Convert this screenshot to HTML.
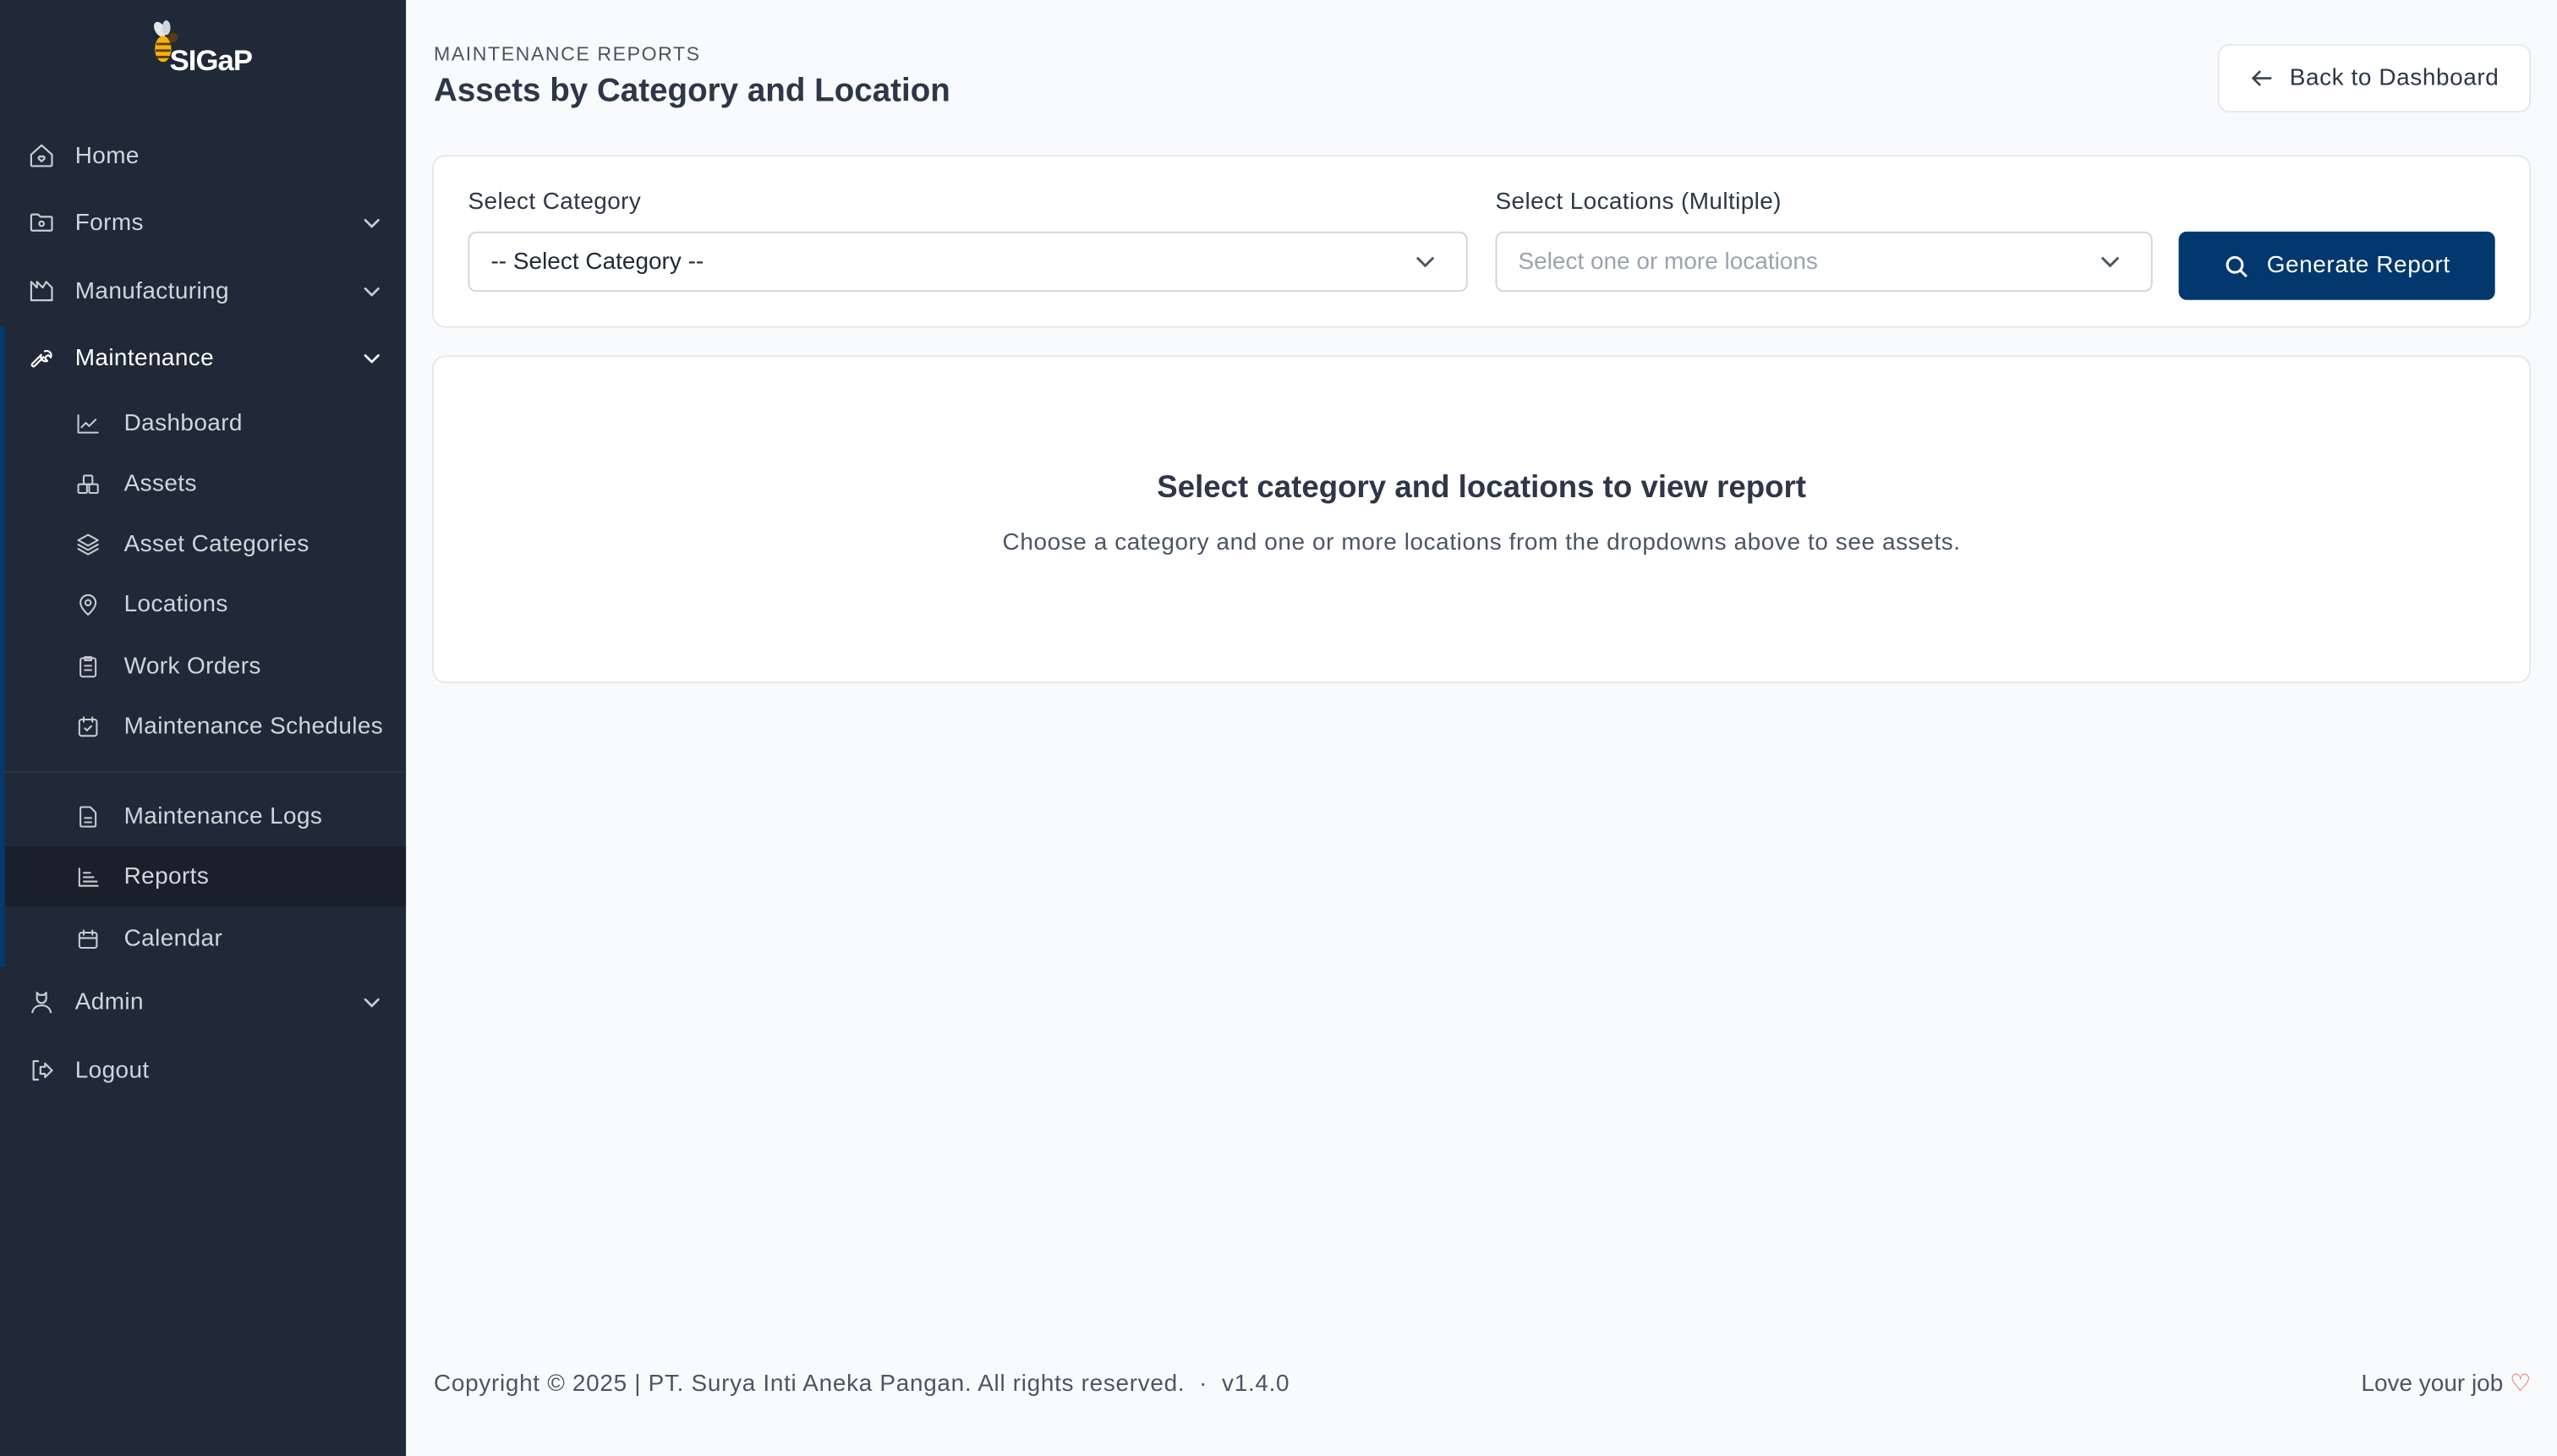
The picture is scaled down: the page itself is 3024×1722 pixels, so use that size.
<!DOCTYPE html>
<html><head><meta charset="utf-8"><style>
*{box-sizing:border-box;margin:0;padding:0}
html,body{width:3024px;height:1722px;overflow:hidden;background:#f9fafb}
#w{position:absolute;left:0;top:0;width:1568px;height:893px;transform:scale(1.92857,1.9283);transform-origin:0 0;font-family:"Liberation Sans",sans-serif}
.sb{position:absolute;left:0;top:0;width:249px;height:893px;background:#1f2937}
.bar{position:absolute;left:0;top:200px;width:3px;height:393px;background:#053a70}
.it{position:absolute;left:0;width:249px;height:37px;display:flex;align-items:center;color:#d1d5db;font-size:14.5px;letter-spacing:0.2px}
.it svg{position:absolute;width:17px;height:17px;fill:none;stroke:#c9ccd1;stroke-width:1.6;stroke-linecap:round;stroke-linejoin:round}
.top svg{left:17px}.top span{position:absolute;left:46px}
.sub svg{left:46px;width:16px;height:16px}.sub span{position:absolute;left:76px}
.it .chev{left:223px;width:10px;height:6px;stroke-width:1.4}
.main{position:absolute;left:249px;top:0;right:0;bottom:0;background:#f9fafb;color:#374151}
.card{position:absolute;background:#fff;border:1px solid #e5e7eb;border-radius:8px}
.sel{position:absolute;height:37px;border:1px solid #d1d5db;border-radius:5px;background:#fff;font-size:14.5px;display:flex;align-items:center;padding-left:13px}
</style></head><body><div id="w">
<div class="sb">
 <div style="position:absolute;left:90px;top:12px;width:70px;height:36px">
  <svg width="22" height="30" viewBox="0 0 22 30" style="position:absolute;left:0;top:0"><ellipse cx="8" cy="6" rx="3" ry="5" fill="#e5e7eb" transform="rotate(-30 8 6)"/><ellipse cx="12" cy="5" rx="2.5" ry="4.5" fill="#d1d5db"/><ellipse cx="10" cy="18" rx="5" ry="8" fill="#f5b400"/><path d="M6 15h9M5.5 19h9M6 23h8" stroke="#5a3a10" stroke-width="1.5"/><circle cx="16" cy="11" r="3" fill="#5a3a10"/></svg>
  <div style="position:absolute;left:14px;top:15px;color:#fff;font-weight:bold;font-size:18px;letter-spacing:-0.5px">SIGaP</div>
 </div>
 <div class="bar"></div>
 <div class="it top" style="top:77px"><svg viewBox="0 0 24 24"><path d="M3 11l9-8 9 8v9a1 1 0 01-1 1H4a1 1 0 01-1-1z"/><path d="M12 17l-2.5-2.5a1.5 1.5 0 012.5-1.5 1.5 1.5 0 012.5 1.5z"/></svg><span>Home</span></div>
 <div class="it top" style="top:118px"><svg viewBox="0 0 24 24"><path d="M3 6a1 1 0 011-1h5l2 2h9a1 1 0 011 1v10a1 1 0 01-1 1H4a1 1 0 01-1-1z"/><circle cx="12" cy="13" r="2"/></svg><span>Forms</span><svg class="chev" viewBox="0 0 10 6"><path d="M1 1l4 4 4-4"/></svg></div>
 <div class="it top" style="top:160px"><svg viewBox="0 0 24 24"><path d="M3 20V4l5 5V4l5 5 3-5 5 5v11z"/></svg><span>Manufacturing</span><svg class="chev" viewBox="0 0 10 6"><path d="M1 1l4 4 4-4"/></svg></div>
 <div class="it top" style="top:201px;color:#fff"><svg viewBox="0 0 24 24" style="stroke:#fff"><path d="M14.7 6.3a4 4 0 015.3 5.3l-2-2-2 1-1 2 2 2a4 4 0 01-5.3-5.3L4 17a1.4 1.4 0 002 2l7.7-7.7"/></svg><span>Maintenance</span><svg class="chev" viewBox="0 0 10 6" style="stroke:#fff"><path d="M1 1l4 4 4-4"/></svg></div>
 <div class="it sub" style="top:241px"><svg viewBox="0 0 24 24"><path d="M3 4v16h18M6 15l4-4 3 3 6-6"/></svg><span>Dashboard</span></div>
 <div class="it sub" style="top:278px"><svg viewBox="0 0 24 24"><rect x="3" y="12" width="8" height="8" rx="1"/><rect x="13" y="12" width="8" height="8" rx="1"/><rect x="8" y="4" width="8" height="8" rx="1"/></svg><span>Assets</span></div>
 <div class="it sub" style="top:315px"><svg viewBox="0 0 24 24"><path d="M12 3l9 5-9 5-9-5z"/><path d="M3 12l9 5 9-5M3 16l9 5 9-5"/></svg><span>Asset Categories</span></div>
 <div class="it sub" style="top:352px"><svg viewBox="0 0 24 24"><path d="M12 21s-7-6-7-11a7 7 0 0114 0c0 5-7 11-7 11z"/><circle cx="12" cy="10" r="2.5"/></svg><span>Locations</span></div>
 <div class="it sub" style="top:390px"><svg viewBox="0 0 24 24"><rect x="5" y="4" width="14" height="17" rx="2"/><path d="M9 3h6v3H9zM9 11h6M9 15h6"/></svg><span>Work Orders</span></div>
 <div class="it sub" style="top:427px"><svg viewBox="0 0 24 24"><rect x="4" y="5" width="16" height="15" rx="2"/><path d="M8 3v4M16 3v4M9 13l2 2 4-4"/></svg><span>Maintenance Schedules</span></div>
 <div style="position:absolute;left:0;top:473px;width:249px;height:1px;background:#2a3441"></div>
 <div class="it sub" style="top:482px"><svg viewBox="0 0 24 24"><path d="M6 3h8l5 5v12a1 1 0 01-1 1H6a1 1 0 01-1-1V4a1 1 0 011-1zM9 13h6M9 17h6"/></svg><span>Maintenance Logs</span></div>
 <div class="it sub" style="top:519px;background:#1a202b;left:3px;width:246px"><svg viewBox="0 0 24 24" style="left:43px"><path d="M4 4v16h17M8 8h6M8 12h9M8 16h12"/></svg><span style="left:73px">Reports</span></div>
 <div class="it sub" style="top:557px"><svg viewBox="0 0 24 24"><rect x="4" y="6" width="16" height="14" rx="2"/><path d="M8 4v4M16 4v4M4 11h16"/></svg><span>Calendar</span></div>
 <div class="it top" style="top:596px"><svg viewBox="0 0 24 24"><path d="M8 4l2 2h4l2-2v5a4 4 0 01-8 0z"/><path d="M4 21c1-4 4-6 8-6s7 2 8 6"/></svg><span>Admin</span><svg class="chev" viewBox="0 0 10 6"><path d="M1 1l4 4 4-4"/></svg></div>
 <div class="it top" style="top:638px"><svg viewBox="0 0 24 24"><path d="M9 4H5v16h4M11 9h4V6l6 6-6 6v-3h-4z"/></svg><span>Logout</span></div>
</div>
<div class="main">
 <div style="position:absolute;left:17px;top:26px;font-size:12px;letter-spacing:0.8px;color:#4b5563">MAINTENANCE REPORTS</div>
 <div style="position:absolute;left:17px;top:45px;font-size:20px;font-weight:bold;color:#2d3748">Assets by Category and Location</div>
 <div class="card" style="left:1111px;top:27px;width:192px;height:42px;border-radius:7px;display:flex;align-items:center;font-size:14.5px;color:#2d3748"><svg width="16" height="16" viewBox="0 0 24 24" style="position:absolute;left:18px" fill="none" stroke="#374151" stroke-width="2" stroke-linecap="round"><path d="M20 12H4M10 6l-6 6 6 6"/></svg><span style="position:absolute;left:43px;letter-spacing:0.3px">Back to Dashboard</span></div>
 <div class="card" style="left:16px;top:95px;width:1287px;height:106px">
  <div style="position:absolute;left:21px;top:20px;font-size:14.5px;color:#2d3748;letter-spacing:0.2px">Select Category</div>
  <div class="sel" style="left:21px;top:46px;width:613px;color:#1f2937">-- Select Category --<svg width="12" height="8" viewBox="0 0 12 8" style="position:absolute;right:19px" fill="none" stroke="#4b5563" stroke-width="1.5"><path d="M1 1l5 5 5-5"/></svg></div>
  <div style="position:absolute;left:651px;top:20px;font-size:14.5px;color:#2d3748;letter-spacing:0.2px">Select Locations (Multiple)</div>
  <div class="sel" style="left:651px;top:46px;width:403px;color:#9ca3af">Select one or more locations<svg width="12" height="8" viewBox="0 0 12 8" style="position:absolute;right:19px" fill="none" stroke="#4b5563" stroke-width="1.5"><path d="M1 1l5 5 5-5"/></svg></div>
  <div style="position:absolute;left:1070px;top:46px;width:194px;height:42px;background:#03386e;border-radius:5px;color:#fff;font-size:14.5px;display:flex;align-items:center"><svg width="17" height="17" viewBox="0 0 24 24" style="position:absolute;left:27px" fill="none" stroke="#fff" stroke-width="2.2" stroke-linecap="round"><circle cx="10.5" cy="10.5" r="6.5"/><path d="M15.5 15.5L20 20"/></svg><span style="position:absolute;left:54px;letter-spacing:0.3px">Generate Report</span></div>
 </div>
 <div class="card" style="left:16px;top:218px;width:1287px;height:201px">
  <div style="position:absolute;left:0;right:0;top:70px;text-align:center;font-size:19px;font-weight:bold;color:#2d3748">Select category and locations to view report</div>
  <div style="position:absolute;left:0;right:0;top:106px;text-align:center;font-size:14.5px;color:#4b5563;letter-spacing:0.3px">Choose a category and one or more locations from the dropdowns above to see assets.</div>
 </div>
 <div style="position:absolute;left:17px;top:841px;font-size:14.5px;color:#4b5563;letter-spacing:0.35px">Copyright © 2025 | PT. Surya Inti Aneka Pangan. All rights reserved. &nbsp;·&nbsp; v1.4.0</div>
 <div style="position:absolute;right:16px;top:841px;font-size:14.5px;color:#4b5563">Love your job <span style="color:#ef4444">♡</span></div>
</div>
</div></body></html>
